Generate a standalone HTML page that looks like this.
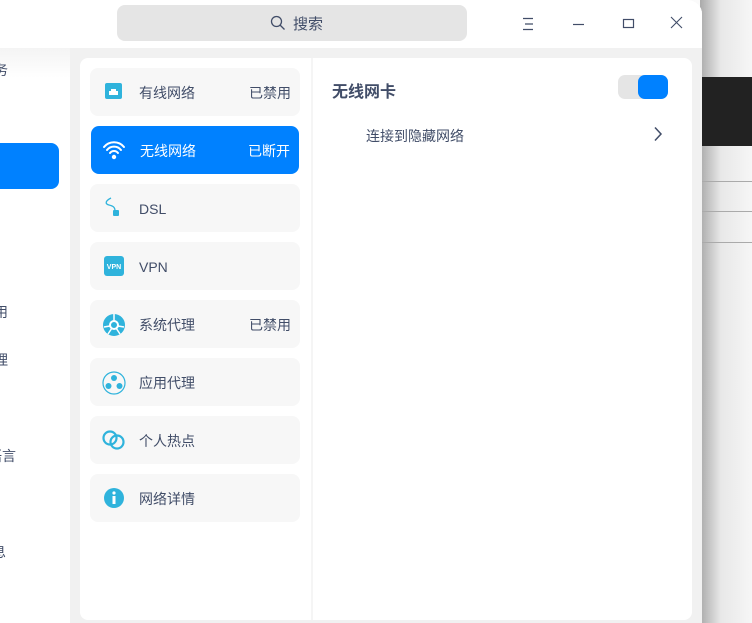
<!DOCTYPE html>
<html><head><meta charset="utf-8"><style>
*{margin:0;padding:0;box-sizing:border-box}
body{width:752px;height:623px;overflow:hidden;position:relative;background:#fafafa;font-family:"Liberation Sans","Noto Sans CJK SC",sans-serif;color:#414d68}
.bgr{position:absolute;left:700px;top:0;width:52px;height:623px;background:linear-gradient(90deg,#aaa,#e8e8e8 40%,#f6f6f6)}
.dark{position:absolute;left:702px;top:77px;width:50px;height:69px;background:#222}
.ln{position:absolute;left:702px;width:50px;height:1px;background:#aaa}
.win{position:absolute;left:0;top:0;width:702px;height:623px;background:#f1f1f1;border-top-right-radius:14px;overflow:hidden}
.title{position:absolute;left:0;top:0;width:702px;height:48px;background:#fff}
.search{position:absolute;left:117px;top:5px;width:350px;height:36px;background:#e5e5e5;border-radius:8px;font-size:15px;color:#414d68}
.side{position:absolute;left:0;top:48px;width:70px;height:575px;background:linear-gradient(#f4f4f4,#fff 30px)}
.sel{position:absolute;left:-10px;top:143px;width:69px;height:46px;background:#0081ff;border-radius:8px}
.st{position:absolute;font-size:14px;color:#414d68}
.panel{position:absolute;left:80px;top:58px;width:612px;height:562px;background:#fff;border-radius:8px}
.div{position:absolute;left:311px;top:58px;width:2px;height:562px;background:#f5f5f5}
.item{position:absolute;left:90px;width:210px;height:48px;background:#f7f7f7;border-radius:8px;font-size:14px}
.item .t{position:absolute;left:49px;top:16px;line-height:18px}
.item .r{position:absolute;right:9px;top:16px;line-height:18px}
.item svg{position:absolute;left:13px;top:13px}
.on{background:#0081ff;color:#fff}
</style></head><body>
<div class="bgr"></div><div class="dark"></div>
<div class="ln" style="top:181px"></div><div class="ln" style="top:211px"></div><div class="ln" style="top:242px"></div>
<div class="win">
<div class="title"></div>
<div class="search"><svg style="position:absolute;left:153px;top:10px" width="16" height="16" viewBox="0 0 16 16"><circle cx="6.5" cy="6.5" r="5" fill="none" stroke="#414d68" stroke-width="1.3"/><path d="M10 10l4.5 4.5" stroke="#414d68" stroke-width="1.3"/></svg><span style="position:absolute;left:176px;top:8px">搜索</span></div>
<svg style="position:absolute;left:520px;top:16px" width="16" height="16"><path d="M3 2.5h10M5 8h8M3 13.5h10" stroke="#414d68" stroke-width="1.2"/></svg>
<svg style="position:absolute;left:570px;top:16px" width="16" height="16"><path d="M3 8.5h11" stroke="#414d68" stroke-width="1.2"/></svg>
<svg style="position:absolute;left:621px;top:16px" width="16" height="16"><rect x="2.5" y="3.5" width="10" height="8" fill="none" stroke="#414d68" stroke-width="1.2"/></svg>
<svg style="position:absolute;left:669px;top:15px" width="16" height="16"><path d="M2 2l11 11M13 2L2 13" stroke="#414d68" stroke-width="1.1"/></svg>
<div class="side"></div>
<div class="sel"></div>
<div class="st" style="left:-6px;top:60px">务</div>
<div class="st" style="left:-6px;top:302px">用</div>
<div class="st" style="left:-6px;top:350px">理</div>
<div class="st" style="left:-12px;top:446px">语言</div>
<div class="st" style="left:-8px;top:542px">息</div>
<div class="panel"></div>
<div class="div"></div>
<div class="item" style="top:68px"><svg width="20" height="20"><rect x="2" y="2" width="17" height="16" rx="2" fill="#2fb3dc"/><path d="M6 14V10h2V8h5v2h2v4z" fill="#fff"/></svg><span class="t">有线网络</span><span class="r">已禁用</span></div>
<div class="item on" style="top:126px;left:91px;width:208px"><svg width="24" height="22" style="left:11px"><path d="M2 8a13 13 0 0 1 20 0M5 11a9 9 0 0 1 14 0M8 14a5 5 0 0 1 8 0" stroke="#fff" stroke-width="2" fill="none" stroke-linecap="round"/><circle cx="12" cy="18" r="2.2" fill="#fff"/></svg><span class="t">无线网络</span><span class="r">已断开</span></div>
<div class="item" style="top:184px"><svg width="20" height="22"><path d="M8 1C2 4 2 7 6 8s6 2 6 6" stroke="#2fb3dc" stroke-width="1.3" fill="none"/><rect x="10" y="13" width="6" height="6" rx="1" fill="#2fb3dc"/></svg><span class="t">DSL</span></div>
<div class="item" style="top:242px"><svg width="22" height="22"><rect x="1" y="1" width="20" height="20" rx="3" fill="#2fb3dc"/><text x="11" y="14" font-size="7" font-weight="bold" fill="#fff" text-anchor="middle" font-family="Liberation Sans">VPN</text></svg><span class="t">VPN</span></div>
<div class="item" style="top:300px"><svg width="24" height="24" style="left:12px"><circle cx="12" cy="12" r="11" fill="#2fb3dc"/><circle cx="12" cy="12" r="4" fill="none" stroke="#fff" stroke-width="2"/><path d="M2 14l6-1M22 14l-6-1M12 8V1M6 21l4-6M18 21l-4-6" stroke="#fff" stroke-width="1.5"/></svg><span class="t">系统代理</span><span class="r">已禁用</span></div>
<div class="item" style="top:358px"><svg width="24" height="24" style="left:12px"><circle cx="12" cy="12" r="11" fill="none" stroke="#2fb3dc" stroke-width="1.2"/><circle cx="12" cy="7" r="3" fill="#2fb3dc"/><circle cx="6.5" cy="15" r="3" fill="#2fb3dc"/><circle cx="17.5" cy="15" r="3" fill="#2fb3dc"/></svg><span class="t">应用代理</span></div>
<div class="item" style="top:416px"><svg width="26" height="22" style="left:11px"><circle cx="9" cy="9" r="6.5" fill="none" stroke="#2fb3dc" stroke-width="2.2"/><circle cx="16" cy="13" r="6.5" fill="none" stroke="#2fb3dc" stroke-width="2.2"/></svg><span class="t">个人热点</span></div>
<div class="item" style="top:474px"><svg width="22" height="22"><circle cx="11" cy="11" r="10" fill="#2fb3dc"/><circle cx="11" cy="6" r="1.6" fill="#fff"/><rect x="9.5" y="9" width="3" height="8" fill="#fff"/></svg><span class="t">网络详情</span></div>
<div style="position:absolute;left:332px;top:78px;font-size:16px;font-weight:bold;color:#414d68">无线网卡</div>
<div style="position:absolute;left:618px;top:75px;width:50px;height:24px;border-radius:7px;background:#e5e5e5"></div>
<div style="position:absolute;left:638px;top:75px;width:30px;height:24px;border-radius:7px;background:#0081ff"></div>
<div style="position:absolute;left:366px;top:126px;font-size:14px;color:#414d68">连接到隐藏网络</div>
<svg style="position:absolute;left:652px;top:126px" width="12" height="16"><path d="M3 1.5l6 6.5-6 6.5" stroke="#414d68" stroke-width="1.5" fill="none"/></svg>
</div>
</body></html>
